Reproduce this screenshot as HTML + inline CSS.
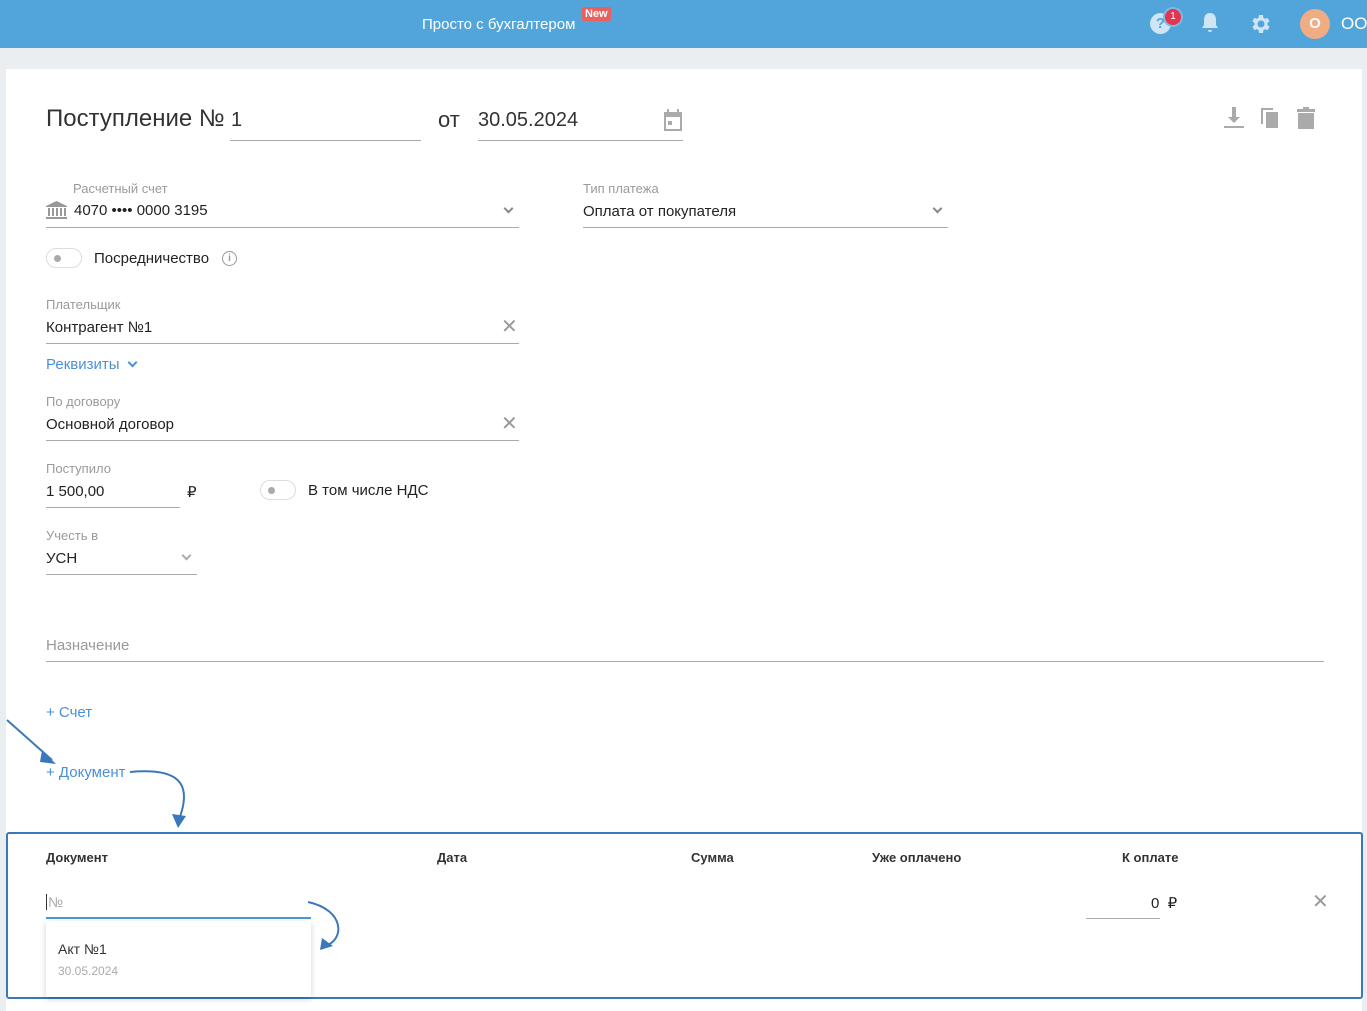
<!DOCTYPE html>
<html><head><meta charset="utf-8"><style>
*{margin:0;padding:0;box-sizing:border-box}
body{width:1367px;height:1011px;background:#ebeef1;font-family:"Liberation Sans","Noto Sans CJK SC",sans-serif;color:#222;position:relative;overflow:hidden}
.a{position:absolute;white-space:nowrap}
.hdr{position:absolute;left:0;top:0;width:1367px;height:48px;background:#52a5db}
.card{position:absolute;left:6px;top:69px;width:1356px;height:942px;background:#fff}
.lbl{font-size:13px;color:#9a9a9a}
.val{font-size:15px;color:#222}
.line{position:absolute;height:1px;background:#aaa}
.tog{position:absolute;width:36px;height:20px;border:1px solid #ddd;border-radius:10px}
.tog:after{content:"";position:absolute;left:7px;top:6px;width:7px;height:7px;border-radius:50%;background:#aaa}
.chev{position:absolute;width:7px;height:7px;border-right:2px solid #888;border-bottom:2px solid #888;transform:rotate(45deg)}
.x{position:absolute;font-size:20px;color:#999;line-height:1}
.th{font-size:13px;font-weight:bold;color:#333}
.link{font-size:15px;color:#4a90d9}
</style></head><body>
<div class="hdr"></div>
<div class="a" style="left:422px;top:16px;color:#fff;font-size:15px">Просто с бухгалтером</div>
<div class="a" style="left:582px;top:7px;background:#e8605f;color:#fff;font-size:11px;font-weight:bold;padding:1px 3px;border-radius:2px">New</div>
<div class="a" style="left:1150px;top:13px;width:21px;height:21px;border-radius:50%;background:#cfe4f4;color:#52a5db;font-weight:bold;font-size:15px;text-align:center;line-height:21px">?</div>
<div class="a" style="left:1165px;top:9px;width:16px;height:16px;border-radius:50%;background:#e23550;color:#fff;font-size:10px;text-align:center;line-height:16px;box-shadow:0 0 0 2px #7fb7e2">1</div>
<svg class="a" style="left:1200px;top:12px" width="20" height="22" viewBox="0 0 20 22"><path d="M10 1c-4 0-6 3-6 7v5l-2 3h16l-2-3V8c0-4-2-7-6-7z M8 18h4a2 2 0 0 1-4 0z" fill="#cfe4f4"/></svg>
<svg class="a" style="left:1248px;top:12px" width="24" height="24" viewBox="0 0 24 24"><path fill="#cfe4f4" d="M19.4 13a7.5 7.5 0 0 0 0-2l2.1-1.6-2-3.5-2.5 1a7 7 0 0 0-1.7-1L15 3h-4l-.4 2.7a7 7 0 0 0-1.7 1l-2.5-1-2 3.5L6.5 11a7.5 7.5 0 0 0 0 2l-2.1 1.6 2 3.5 2.5-1a7 7 0 0 0 1.7 1L11 21h4l.4-2.7a7 7 0 0 0 1.7-1l2.5 1 2-3.5zM13 15.5a3.5 3.5 0 1 1 0-7 3.5 3.5 0 0 1 0 7z"/></svg>
<div class="a" style="left:1300px;top:9px;width:30px;height:30px;border-radius:50%;background:#f0ad84;color:#fff;font-weight:bold;font-size:15px;text-align:center;line-height:30px">О</div>
<div class="a" style="left:1341px;top:14px;color:#fff;font-size:17px">ООО</div>

<div class="card"></div>
<div class="a" style="left:46px;top:105px;font-size:24px;color:#333">Поступление №</div>
<div class="a" style="left:231px;top:109px;font-size:20px;color:#333">1</div>
<div class="line" style="left:230px;top:140px;width:191px"></div>
<div class="a" style="left:438px;top:107px;font-size:22px;color:#333">от</div>
<div class="a" style="left:478px;top:109px;font-size:20px;color:#333">30.05.2024</div>
<div class="line" style="left:478px;top:140px;width:205px"></div>
<svg class="a" style="left:663px;top:109px" width="20" height="22" viewBox="0 0 20 22"><path fill="#aaa" d="M4 0h2v3h8V0h2v3h3v19H1V3h3zM3 8v12h14V8z M5 12h4v4H5z"/></svg>
<svg class="a" style="left:1223px;top:107px" width="22" height="22" viewBox="0 0 22 22"><path fill="#aaa" d="M9 0h4v10h4l-6 6-6-6h4z M1 19h20v2H1z"/></svg>
<svg class="a" style="left:1260px;top:107px" width="20" height="22" viewBox="0 0 20 22"><path fill="#aaa" d="M1 1h12v2H3v14H1z M6 5h12v16H6z"/></svg>
<svg class="a" style="left:1297px;top:107px" width="18" height="22" viewBox="0 0 18 22"><path fill="#aaa" d="M6 0h6v2h6v3H0V2h6z M1 6h16v16H1z"/></svg>

<div class="a lbl" style="left:73px;top:181px">Расчетный счет</div>
<svg class="a" style="left:46px;top:201px" width="21" height="18" viewBox="0 0 21 18"><path fill="#999" d="M10.5 0 21 5v1H0V5z M2 7h2v8H2z M6 7h2v8H6z M10 7h2v8h-2z M14 7h2v8h-2z M18 7h2v8h-2z M0 16h21v2H0z"/></svg>
<div class="a val" style="left:74px;top:202px">4070 •••• 0000 3195</div>
<div class="chev" style="left:505px;top:205px"></div>
<div class="line" style="left:46px;top:227px;width:473px"></div>
<div class="a lbl" style="left:583px;top:181px">Тип платежа</div>
<div class="a val" style="left:583px;top:203px">Оплата от покупателя</div>
<div class="chev" style="left:934px;top:205px"></div>
<div class="line" style="left:583px;top:227px;width:365px"></div>

<div class="tog" style="left:46px;top:248px"></div>
<div class="a val" style="left:94px;top:250px">Посредничество</div>
<div class="a" style="left:222px;top:251px;width:15px;height:15px;border:1.3px solid #999;border-radius:50%;font-size:10px;color:#999;text-align:center;line-height:13px;font-weight:bold">i</div>

<div class="a lbl" style="left:46px;top:297px">Плательщик</div>
<div class="a val" style="left:46px;top:319px">Контрагент №1</div>
<div class="x" style="left:501px;top:317px">✕</div>
<div class="line" style="left:46px;top:343px;width:473px"></div>
<div class="a link" style="left:46px;top:356px">Реквизиты</div>
<div class="chev" style="left:129px;top:359px;border-color:#4a90d9"></div>

<div class="a lbl" style="left:46px;top:394px">По договору</div>
<div class="a val" style="left:46px;top:416px">Основной договор</div>
<div class="x" style="left:501px;top:414px">✕</div>
<div class="line" style="left:46px;top:440px;width:473px"></div>

<div class="a lbl" style="left:46px;top:461px">Поступило</div>
<div class="a val" style="left:46px;top:483px">1 500,00</div>
<div class="a val" style="left:187px;top:483px">₽</div>
<div class="line" style="left:46px;top:507px;width:134px"></div>
<div class="tog" style="left:260px;top:480px"></div>
<div class="a val" style="left:308px;top:482px">В том числе НДС</div>

<div class="a lbl" style="left:46px;top:528px">Учесть в</div>
<div class="a val" style="left:46px;top:550px">УСН</div>
<div class="chev" style="left:183px;top:552px;border-color:#aaa"></div>
<div class="line" style="left:46px;top:574px;width:151px"></div>

<div class="a" style="left:46px;top:637px;font-size:15px;color:#999">Назначение</div>
<div class="line" style="left:46px;top:661px;width:1278px"></div>

<div class="a link" style="left:46px;top:704px">+ Счет</div>
<div class="a link" style="left:46px;top:764px">+ Документ</div>
<svg class="a" style="left:0;top:710px" width="360" height="260" viewBox="0 0 360 260"><g fill="none" stroke="#3a78bb" stroke-width="2"><path d="M7 10 L52 50"/><path d="M130 62 C175 58 195 70 178 112"/><path d="M308 192 C345 200 345 230 325 236"/></g><g fill="#3a78bb"><path d="M42 40 L56 54 L40 52z"/><path d="M172 104 L178 118 L186 106z"/><path d="M322 228 L320 240 L333 236z"/></g></svg>

<div class="a" style="left:6px;top:832px;width:1357px;height:167px;border:2.5px solid #3a78bb;border-radius:3px"></div>
<div class="a th" style="left:46px;top:850px">Документ</div>
<div class="a th" style="left:437px;top:850px">Дата</div>
<div class="a th" style="left:691px;top:850px">Сумма</div>
<div class="a th" style="left:872px;top:850px">Уже оплачено</div>
<div class="a th" style="left:1122px;top:850px">К оплате</div>
<div class="a" style="left:46px;top:894px;font-size:14px;color:#aaa;border-left:1px solid #333;padding-left:1px">№</div>
<div class="a" style="left:46px;top:917px;width:265px;height:2px;background:#4a9ad8"></div>
<div class="a val" style="left:1151px;top:894px">0&nbsp; ₽</div>
<div class="line" style="left:1086px;top:918px;width:74px"></div>
<div class="x" style="left:1312px;top:892px">✕</div>
<div class="a" style="left:46px;top:921px;width:265px;height:76px;background:#fff;box-shadow:0 2px 6px rgba(0,0,0,.18)"></div>
<div class="a" style="left:58px;top:941px;font-size:14px;color:#333">Акт №1</div>
<div class="a" style="left:58px;top:964px;font-size:12px;color:#aaa">30.05.2024</div>
</body></html>
